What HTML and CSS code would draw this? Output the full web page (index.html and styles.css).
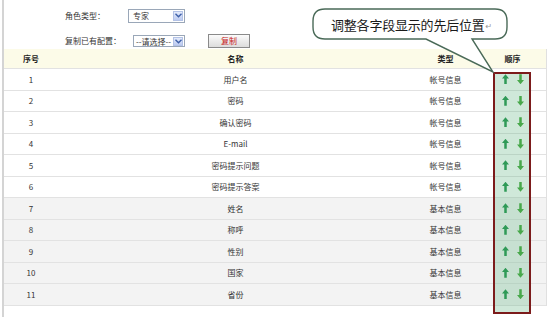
FILE: index.html
```html
<!DOCTYPE html>
<html lang="zh-CN">
<head>
    <meta charset="UTF-8">
    <title>字段顺序配置</title>
    <link rel="stylesheet" href="styles.css">
</head>
<body>

<div class="page">
    <!-- Filters -->
    <div class="filters">
        <span class="filters__label">角色类型：</span>
        <div class="select select--role">
            <span class="select__value">专家</span>
            <span class="select__btn">
                <svg width="7" height="5" viewBox="0 0 7 5"><path d="M0.5 0.8 L3.5 3.8 L6.5 0.8" fill="none" stroke="#3d5fa8" stroke-width="1.4"/></svg>
            </span>
        </div>
        <span></span>

        <span class="filters__label">复制已有配置：</span>
        <div class="select select--copy">
            <span class="select__value">--请选择--</span>
            <span class="select__btn">
                <svg width="7" height="5" viewBox="0 0 7 5"><path d="M0.5 0.8 L3.5 3.8 L6.5 0.8" fill="none" stroke="#3d5fa8" stroke-width="1.4"/></svg>
            </span>
        </div>
        <button class="btn">复制</button>
    </div>

    <!-- Field table -->
    <div class="grid">
        <div class="grid__row grid__row--head">
            <span>序号</span><span>名称</span><span>类型</span><span>顺序</span>
        </div>
        <div class="grid__row"><span>1</span><span>用户名</span><span>帐号信息</span><span class="order"><i class="up"></i><i class="down"></i></span></div>
        <div class="grid__row"><span>2</span><span>密码</span><span>帐号信息</span><span class="order"><i class="up"></i><i class="down"></i></span></div>
        <div class="grid__row"><span>3</span><span>确认密码</span><span>帐号信息</span><span class="order"><i class="up"></i><i class="down"></i></span></div>
        <div class="grid__row"><span>4</span><span>E-mail</span><span>帐号信息</span><span class="order"><i class="up"></i><i class="down"></i></span></div>
        <div class="grid__row"><span>5</span><span>密码提示问题</span><span>帐号信息</span><span class="order"><i class="up"></i><i class="down"></i></span></div>
        <div class="grid__row"><span>6</span><span>密码提示答案</span><span>帐号信息</span><span class="order"><i class="up"></i><i class="down"></i></span></div>
        <div class="grid__row grid__row--alt"><span>7</span><span>姓名</span><span>基本信息</span><span class="order"><i class="up"></i><i class="down"></i></span></div>
        <div class="grid__row grid__row--alt"><span>8</span><span>称呼</span><span>基本信息</span><span class="order"><i class="up"></i><i class="down"></i></span></div>
        <div class="grid__row grid__row--alt"><span>9</span><span>性别</span><span>基本信息</span><span class="order"><i class="up"></i><i class="down"></i></span></div>
        <div class="grid__row grid__row--alt"><span>10</span><span>国家</span><span>基本信息</span><span class="order"><i class="up"></i><i class="down"></i></span></div>
        <div class="grid__row grid__row--alt"><span>11</span><span>省份</span><span>基本信息</span><span class="order"><i class="up"></i><i class="down"></i></span></div>
    </div>
</div>

<!-- Highlight on the order column -->
<div class="highlight"></div>

<!-- Callout -->
<div class="callout">
    <svg class="callout__shape" width="197" height="66" viewBox="0 0 197 66">
        <path d="M13 1 H183 Q195 1 195 13 V19 Q195 31 183 31 H160 L181 64 L114 31 H13 Q1 31 1 19 V13 Q1 1 13 1 Z"
              fill="#fff" stroke="#4a6a58" stroke-width="1.4"/>
    </svg>
    <div class="callout__text">调整各字段显示的先后位置<small>↵</small></div>
</div>

</body>
</html>
```

FILE: styles.css
```css
/* General */
* {
    box-sizing: border-box;
}
body {
    margin: 0;
    padding-left: 2px;
    position: relative;
    background: #fff;
    font-family: "Noto Sans CJK SC", "DejaVu Sans", sans-serif;
    font-size: 8px;
    color: #333;
}
.page {
    border-left: 2px solid #d4d4d4;
    height: 317px;
}

/* Filters */
.filters {
    display: grid;
    grid-template-columns: 63px auto 1fr;
    row-gap: 10px;
    align-items: center;
    padding: 8px 0 0 61px;
    height: 49px;
}
.filters__label {
    line-height: 14px;
}
.select {
    display: flex;
    align-items: center;
    justify-content: space-between;
    border: 1px solid #9aa7b8;
    background: #fff;
    padding: 0 1px 0 4px;
}
.select--role {
    width: 57px;
    height: 14px;
}
.select--copy {
    width: 52px;
    height: 12px;
    margin-left: 5px;
    padding-left: 2px;
}
.select__btn {
    display: flex;
    align-items: center;
    justify-content: center;
    width: 10px;
    height: 10px;
    background: linear-gradient(#e4ebfb, #bccaf0);
    border: 1px solid #b3c2e6;
}
.select--copy .select__btn {
    width: 10px;
    height: 9px;
}
.btn {
    justify-self: start;
    margin-left: 23px;
    width: 42px;
    height: 14px;
    padding: 0;
    border: 1px solid #8a8a8a;
    background: linear-gradient(#fbfbfb, #dcdcdc);
    color: #c81818;
    font: inherit;
    font-size: 8px;
    line-height: 12px;
}

/* Table */
.grid {
    width: 543px;
    border-right: 1px solid #e0e0e0;
}
.grid__row {
    display: grid;
    grid-template-columns: 54px 355px 65px 69px;
    align-items: center;
    height: 21.5px;
    border-bottom: 1px solid #e2e2e2;
    text-align: center;
}
.grid__row--head {
    height: 20px;
    background: #fcfbe8;
    font-weight: bold;
    color: #222;
}
.grid__row--alt {
    background: #f3f3f3;
}
.order {
    position: relative;
    z-index: 2;
    display: flex;
    justify-content: center;
    gap: 8px;
    padding-left: 1px;
}
.order i {
    display: block;
    width: 7px;
    height: 10px;
}
.order .up {
    background: #2f9a57;
    clip-path: polygon(50% 0, 100% 42%, 68% 42%, 68% 100%, 32% 100%, 32% 42%, 0 42%);
}
.order .down {
    background: #48a84b;
    clip-path: polygon(32% 0, 68% 0, 68% 58%, 100% 58%, 50% 100%, 0 58%, 32% 58%);
}

/* Overlays */
.highlight {
    position: absolute;
    left: 493px;
    top: 72px;
    width: 38px;
    height: 242px;
    border: 2px solid #7c1b1b;
    background: rgba(110, 185, 140, 0.33);
    z-index: 1;
}
.callout {
    position: absolute;
    left: 312px;
    top: 8px;
    width: 197px;
    height: 66px;
    z-index: 3;
}
.callout__shape {
    position: absolute;
    left: 0;
    top: 0;
}
.callout__text {
    position: relative;
    height: 32px;
    display: flex;
    align-items: center;
    padding-left: 19px;
    font-size: 13px;
    color: #1a1a1a;
    letter-spacing: -0.2px;
}
.callout__text small {
    font-size: 8px;
    color: #999;
    margin-left: 1px;
    margin-top: 2px;
}
```
